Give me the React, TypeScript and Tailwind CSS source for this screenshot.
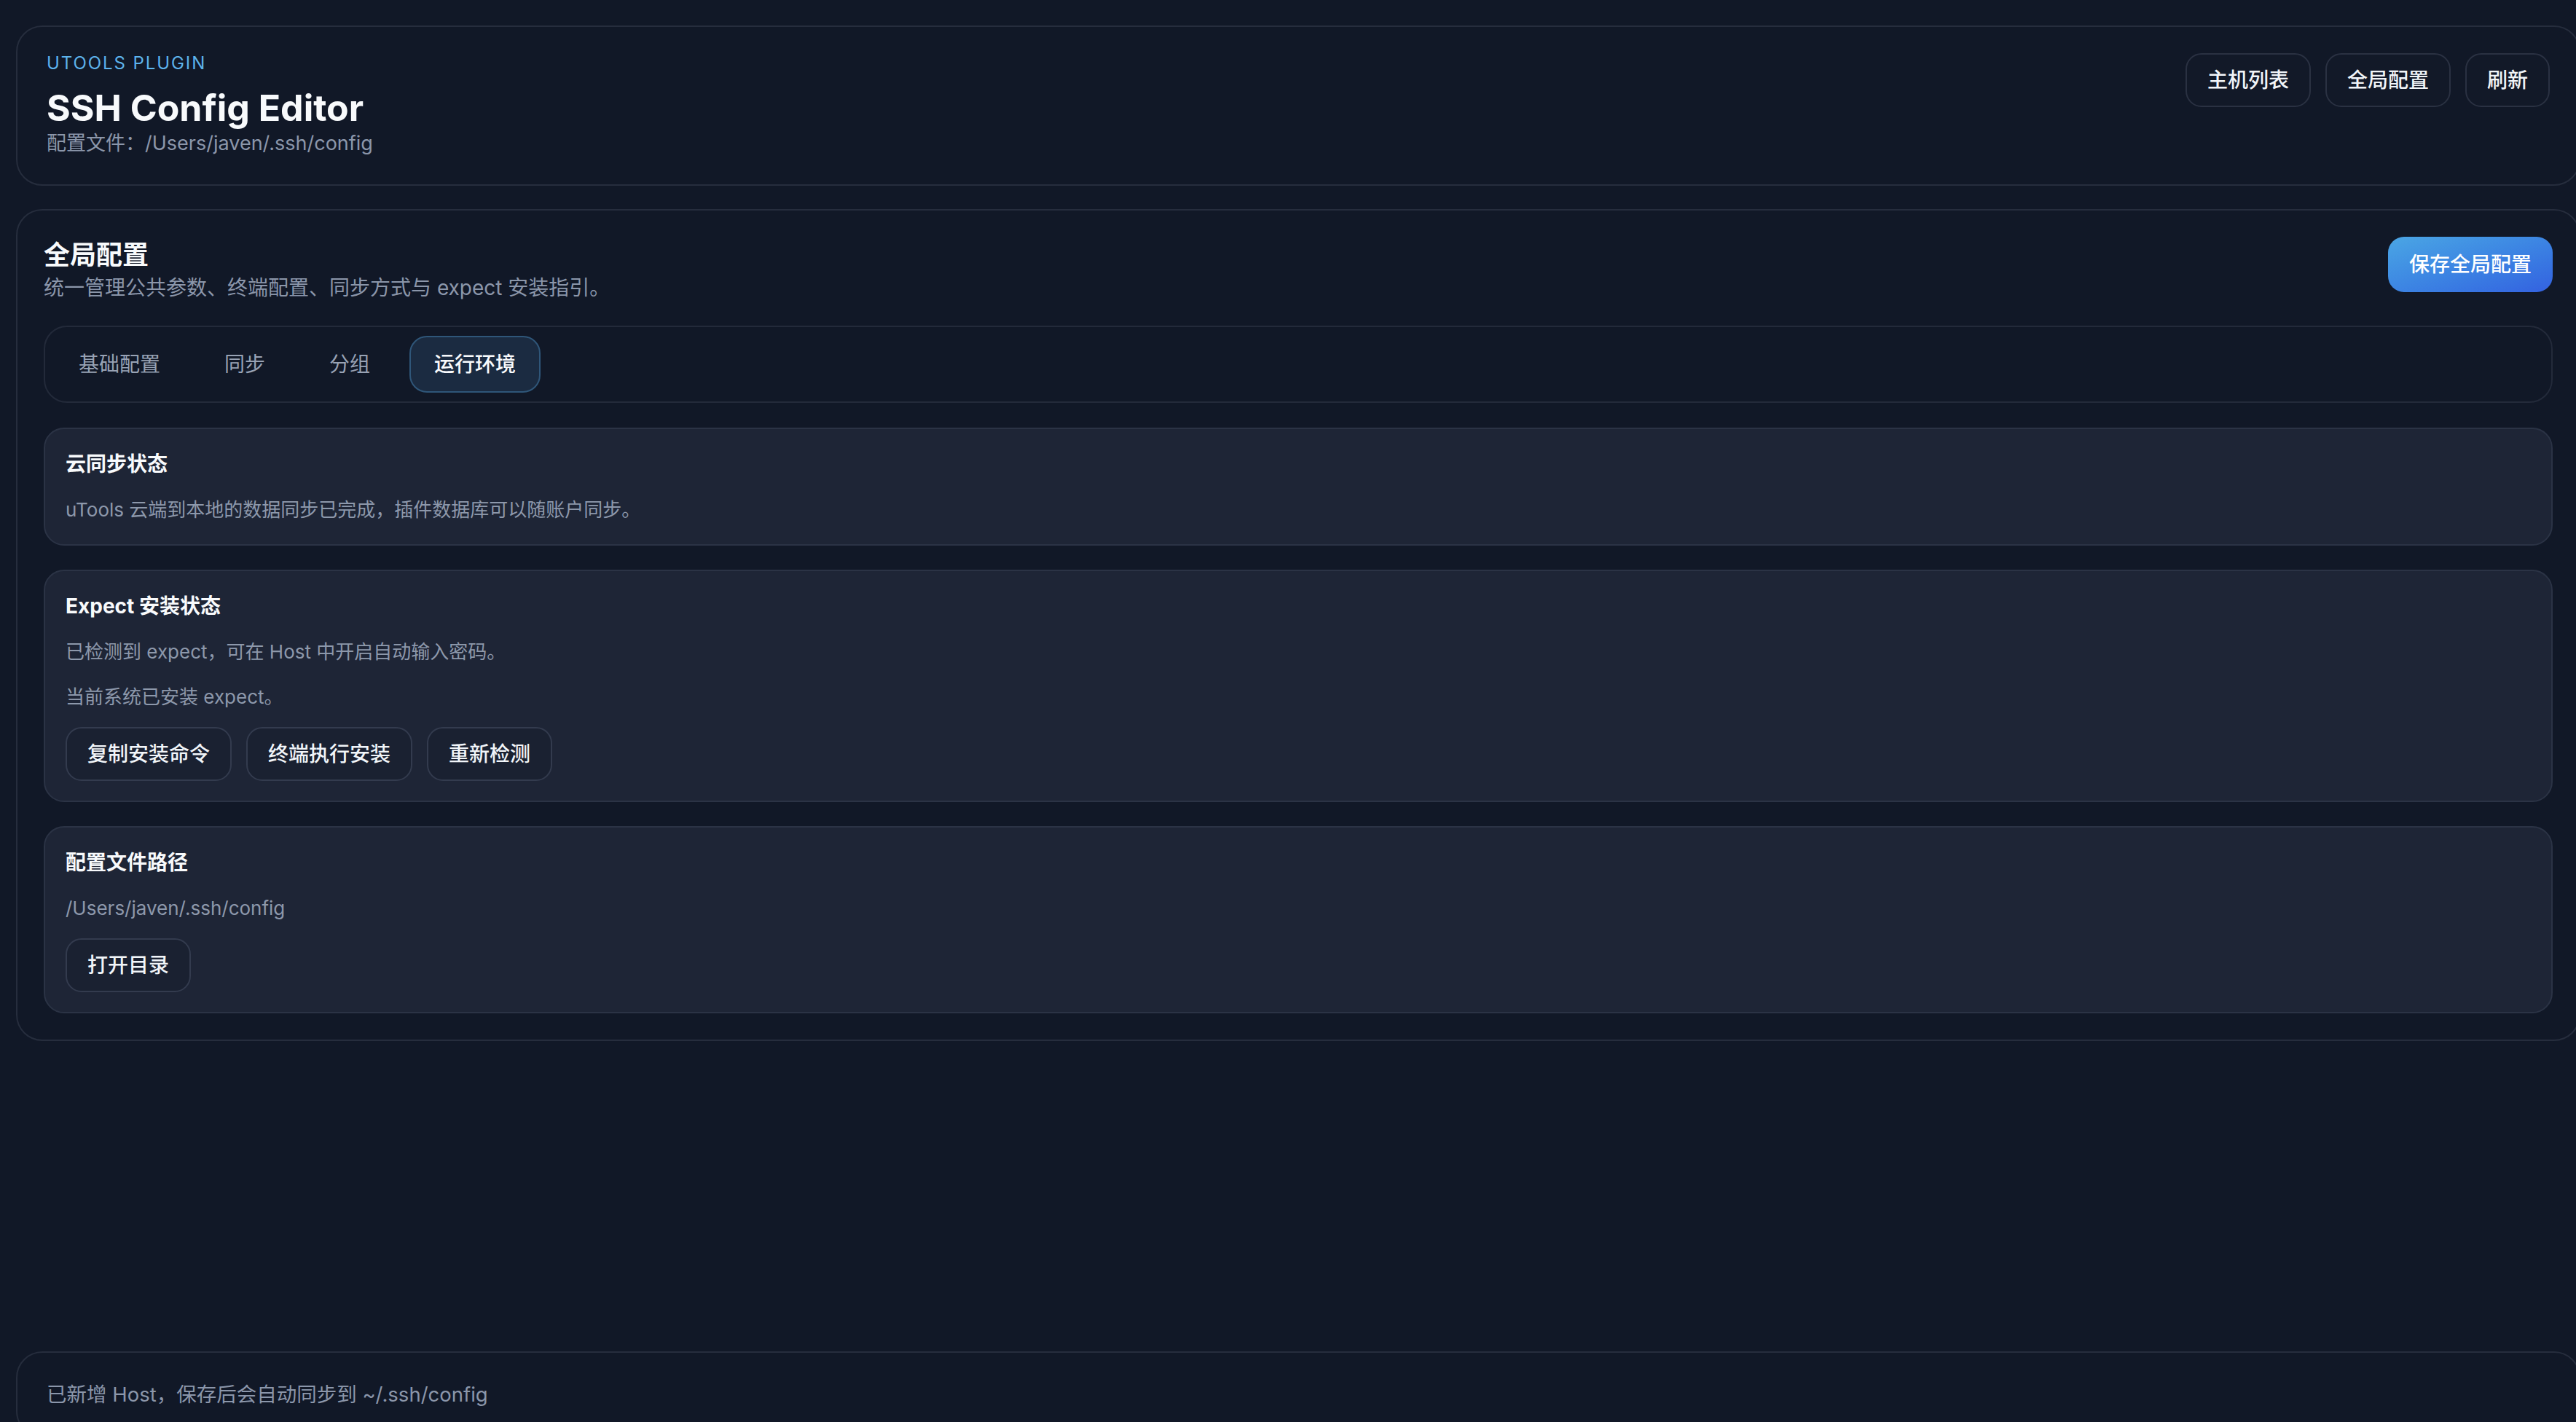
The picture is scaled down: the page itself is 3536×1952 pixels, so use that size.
const font = "font-[family-name:Inter,'Noto_Sans_CJK_SC',sans-serif]"

function GhostButton({ children, dark }: { children: React.ReactNode; dark?: boolean }) {
  return (
    <button
      className={
        'rounded-[22px] border-2 px-[28px] py-[14px] text-[28px] leading-[42px] font-medium text-[#f1f5f9] ' +
        (dark ? 'border-[#333b4e] bg-[#1a2131]' : 'border-[#2a3142] bg-[#121928]')
      }
    >
      {children}
    </button>
  )
}

function Header() {
  return (
    <header className="flex items-start justify-between rounded-[36px] border-2 border-[#262d3d] px-[40px] py-[36px]">
      <div className="flex flex-col">
        <span className="text-[24px] leading-[28px] tracking-[0.08em] text-[#5db3ec]">UTOOLS PLUGIN</span>
        <h1 className="mt-[19px] text-[50px] leading-[57px] font-bold text-[#f8fafc]">SSH Config Editor</h1>
        <p className="text-[27px] leading-[40px] text-[#8b96aa]">配置文件：/Users/javen/.ssh/config</p>
      </div>
      <div className="flex gap-[20px]">
        <GhostButton>主机列表</GhostButton>
        <GhostButton>全局配置</GhostButton>
        <GhostButton>刷新</GhostButton>
      </div>
    </header>
  )
}

const tabs = ['基础配置', '同步', '分组', '运行环境']

function Tabs({ active }: { active: string }) {
  return (
    <div className="mt-[32px] flex gap-[20px] rounded-[32px] border-2 border-[#232a3a] p-[12px]">
      {tabs.map(t => (
        <button
          key={t}
          className={
            'rounded-[24px] border-2 px-[32px] py-[16px] text-[28px] leading-[42px] ' +
            (t === active
              ? 'border-[#2f5679] bg-[#1b2b41] text-[#f8fafc] font-medium'
              : 'border-transparent text-[#98a2b4]')
          }
        >
          {t}
        </button>
      ))}
    </div>
  )
}

function InfoCard({ title, children }: { title: string; children: React.ReactNode }) {
  return (
    <div className="flex flex-col gap-[21px] rounded-[28px] border-2 border-[#2b3345] bg-[#1e2536] px-[28px] py-[27px]">
      <h3 className="text-[28px] leading-[42px] font-bold text-[#f8fafc]">{title}</h3>
      {children}
    </div>
  )
}

function Desc({ children }: { children: React.ReactNode }) {
  return <p className="text-[26px] leading-[41px] text-[#8d98ab]">{children}</p>
}

function GlobalConfig() {
  return (
    <section className="flex flex-col rounded-[36px] border-2 border-[#262d3d] p-[36px]">
      <div className="flex items-start justify-between">
        <div className="flex flex-col">
          <h2 className="text-[36px] leading-[50px] font-bold text-[#f8fafc]">全局配置</h2>
          <p className="text-[28px] leading-[40px] text-[#8b96aa]">
            统一管理公共参数、终端配置、同步方式与 expect 安装指引。
          </p>
        </div>
        <button className="rounded-[22px] bg-linear-to-br from-[#4ba6e4] to-[#3461e0] px-[29px] py-[17px] text-[28px] leading-[42px] font-medium text-white">
          保存全局配置
        </button>
      </div>

      <Tabs active="运行环境" />

      <div className="mt-[34px] flex flex-col gap-[33px]">
        <InfoCard title="云同步状态">
          <Desc>uTools 云端到本地的数据同步已完成，插件数据库可以随账户同步。</Desc>
        </InfoCard>
        <InfoCard title="Expect 安装状态">
          <Desc>已检测到 expect，可在 Host 中开启自动输入密码。</Desc>
          <Desc>当前系统已安装 expect。</Desc>
          <div className="flex gap-[20px]">
            <GhostButton dark>复制安装命令</GhostButton>
            <GhostButton dark>终端执行安装</GhostButton>
            <GhostButton dark>重新检测</GhostButton>
          </div>
        </InfoCard>
        <InfoCard title="配置文件路径">
          <Desc>/Users/javen/.ssh/config</Desc>
          <div className="flex">
            <GhostButton dark>打开目录</GhostButton>
          </div>
        </InfoCard>
      </div>
    </section>
  )
}

export default function App() {
  return (
    <div className={'flex h-[1952px] w-[3536px] flex-col overflow-hidden bg-[#111827] pl-[22px] pt-[35px] ' + font}>
      <div className="flex w-[3520px] flex-col gap-[32px]">
        <Header />
        <GlobalConfig />
      </div>
      <div className="mt-auto mb-[-21px] w-[3520px] rounded-[36px] border-2 border-[#262d3d] px-[40px] py-[36px]">
        <p className="text-[27.5px] leading-[42px] text-[#8b96aa]">已新增 Host，保存后会自动同步到 ~/.ssh/config</p>
      </div>
    </div>
  )
}
